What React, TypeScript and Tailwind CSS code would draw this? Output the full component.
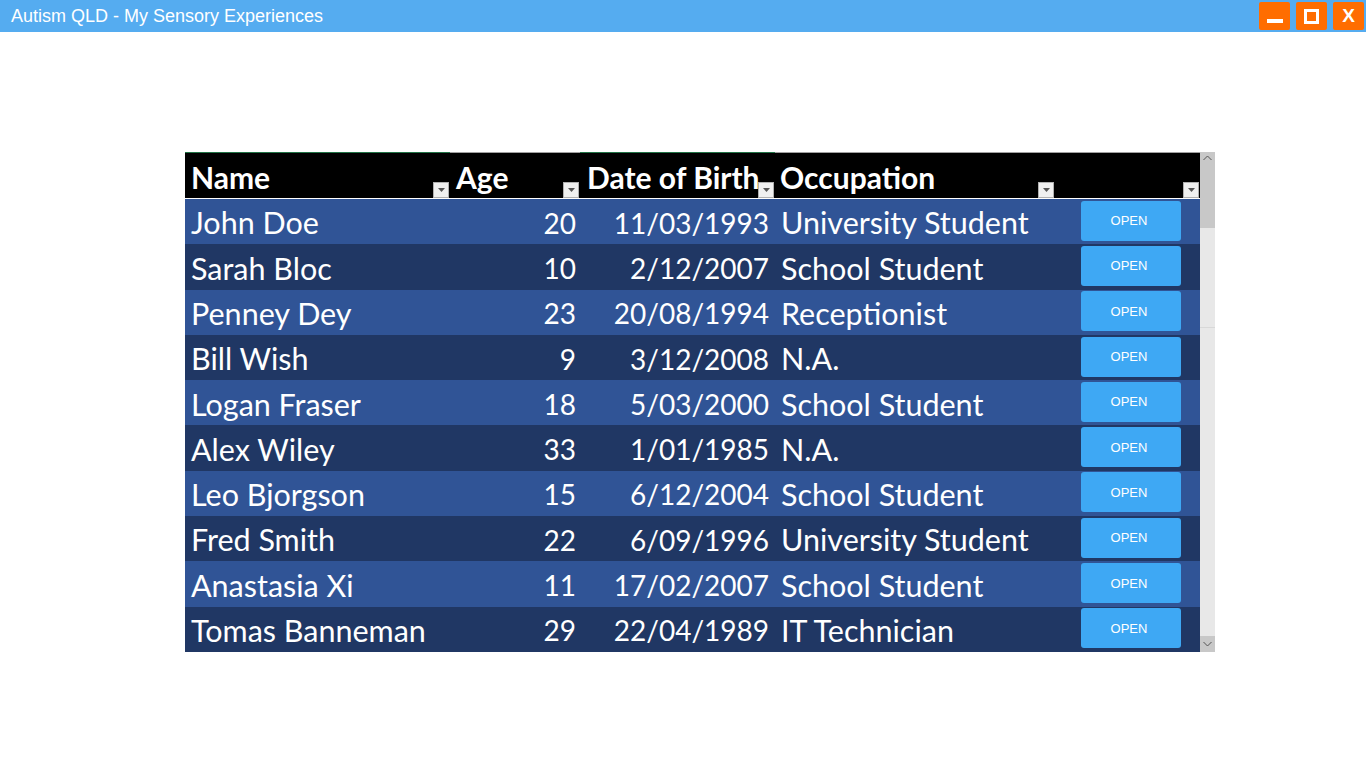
import React from "react";

const rows = [
  ["John Doe", "20", "11/03/1993", "University Student"],
  ["Sarah Bloc", "10", "2/12/2007", "School Student"],
  ["Penney Dey", "23", "20/08/1994", "Receptionist"],
  ["Bill Wish", "9", "3/12/2008", "N.A."],
  ["Logan Fraser", "18", "5/03/2000", "School Student"],
  ["Alex Wiley", "33", "1/01/1985", "N.A."],
  ["Leo Bjorgson", "15", "6/12/2004", "School Student"],
  ["Fred Smith", "22", "6/09/1996", "University Student"],
  ["Anastasia Xi", "11", "17/02/2007", "School Student"],
  ["Tomas Banneman", "29", "22/04/1989", "IT Technician"],
];

function Filter() {
  return (
    <div className="absolute right-[1px] bottom-0 w-[16px] h-[16px] bg-[#f0f0f0] border border-[#b0b0b0] flex items-center justify-center">
      <svg width="7" height="4" viewBox="0 0 7 4">
        <polygon points="0,0 7,0 3.5,4" fill="#555" />
      </svg>
    </div>
  );
}

export default function App() {
  return (
    <div className="w-[1366px] h-[768px] bg-white relative overflow-hidden" style={{ fontFamily: "Lato, sans-serif" }}>
      <div className="h-[32px] bg-[#55acf0] flex items-center justify-between">
        <div className="pl-[11px] text-white text-[18px]" style={{ fontFamily: "'Liberation Sans', Arial, sans-serif" }}>
          Autism QLD - My Sensory Experiences
        </div>
        <div className="flex gap-[6px] pr-[2px]">
          <div className="w-[31px] h-[28px] bg-[#ff6d00] rounded-[2px] flex items-center justify-center">
            <div className="w-[16px] h-[4px] bg-white mt-[9px]" />
          </div>
          <div className="w-[31px] h-[28px] bg-[#ff6d00] rounded-[2px] flex items-center justify-center">
            <div className="w-[15px] h-[15px] border-[3px] border-white" />
          </div>
          <div className="w-[31px] h-[28px] bg-[#ff6d00] rounded-[2px] flex items-center justify-center text-white font-bold text-[19px]" style={{ fontFamily: "'Liberation Sans', Arial, sans-serif" }}>
            X
          </div>
        </div>
      </div>

      <div className="absolute left-[185px] top-[152px] flex">
        <div className="w-[1015px]">
          <div className="flex h-[1px]">
            <div className="w-[265px] bg-[#217346]" />
            <div className="w-[130px] bg-[#a0a0a0]" />
            <div className="w-[195px] bg-[#217346]" />
            <div className="flex-1 bg-[#a0a0a0]" />
          </div>
          <div className="flex h-[45px] bg-black text-white font-bold text-[30px] leading-none">
            <div className="relative w-[265px] pl-[6px] pt-[9px]">Name<Filter /></div>
            <div className="relative w-[130px] pl-[6px] pt-[9px]">Age<Filter /></div>
            <div className="relative w-[195px] pl-[7px] pt-[9px] whitespace-nowrap">Date of Birth<Filter /></div>
            <div className="relative w-[280px] pl-[5px] pt-[9px]">Occupation<Filter /></div>
            <div className="relative flex-1"><Filter /></div>
          </div>
          <div className="h-[1px] bg-white" />
          {rows.map((r, i) => (
            <div key={i} className={`flex h-[45.3px] items-center text-white leading-none ${i % 2 === 0 ? "bg-[#305496]" : "bg-[#203764]"}`}>
              <div className="w-[265px] pl-[6px] pt-[2px] whitespace-nowrap text-[30.5px]">{r[0]}</div>
              <div className="w-[130px] pr-[4px] pt-[2px] text-right text-[28px]">{r[1]}</div>
              <div className="w-[195px] pr-[6px] pt-[2px] text-right text-[28px]">{r[2]}</div>
              <div className="w-[280px] pl-[6px] pt-[2px] whitespace-nowrap text-[30.5px]">{r[3]}</div>
              <div className="flex-1 pl-[26px] pb-[2px]">
                <button className="w-[100px] h-[40px] bg-[#3ea8f4] rounded-[3px] text-white text-[13px] pr-[4px]" style={{ fontFamily: "'Liberation Sans', Arial, sans-serif" }}>
                  OPEN
                </button>
              </div>
            </div>
          ))}
        </div>
        <div className="w-[15px] h-[500px] bg-[#e8e8e8] flex flex-col">
          <div className="h-[76px] bg-[#c8c8c8] flex justify-center pt-[3px]">
            <svg width="9" height="6" viewBox="0 0 9 6"><polyline points="0.5,5 4.5,1 8.5,5" fill="none" stroke="#555" strokeWidth="1" /></svg>
          </div>
          <div className="h-[100px] border-b border-[#d8d8d8]" />
          <div className="flex-1" />
          <div className="h-[16px] bg-[#c8c8c8] flex justify-center items-center">
            <svg width="9" height="6" viewBox="0 0 9 6"><polyline points="0.5,1 4.5,5 8.5,1" fill="none" stroke="#555" strokeWidth="1" /></svg>
          </div>
        </div>
      </div>
    </div>
  );
}
